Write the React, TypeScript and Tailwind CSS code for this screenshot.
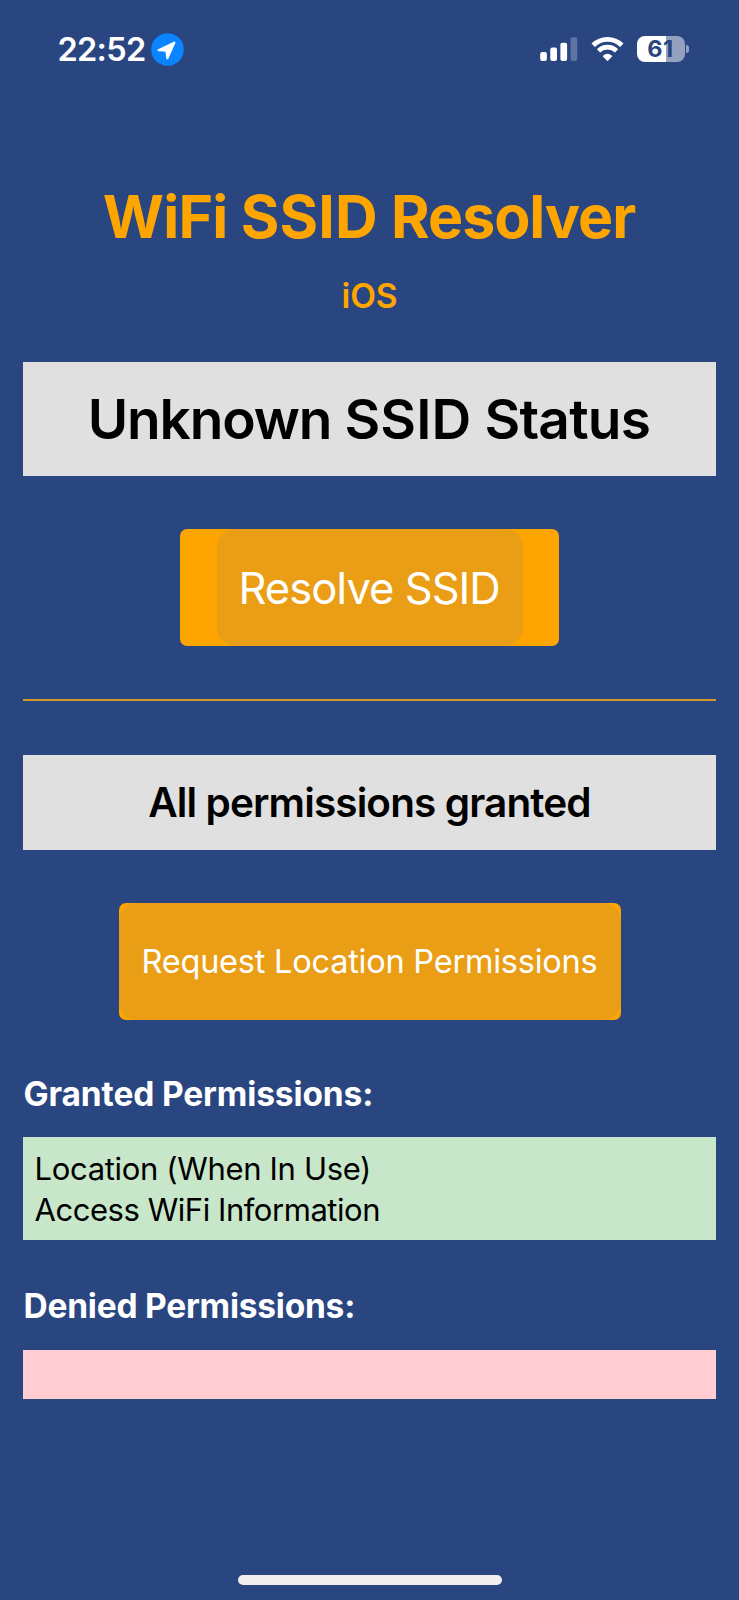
import React from "react";

function LocationBadge() {
  return (
    <svg className="ml-[5px] h-[33px] w-[33px]" viewBox="0 0 33 33" aria-hidden="true">
      <circle cx="16.5" cy="16.5" r="16.3" fill="#0a84ff" />
      <path
        d="M23.3 9.7 16.3 25.2 15.5 17.6 7.6 17.2Z"
        fill="#fff"
        stroke="#fff"
        strokeWidth="2.2"
        strokeLinejoin="round"
      />
    </svg>
  );
}

function CellularIcon() {
  return (
    <svg className="h-[26px] w-[38px]" viewBox="0 0 38 26" fill="#fff" aria-hidden="true">
      <rect x="0.2" y="16" width="6.7" height="9" rx="2" />
      <rect x="10.3" y="11.6" width="6.7" height="13.4" rx="2" />
      <rect x="20.4" y="6.8" width="6.7" height="18.2" rx="2" />
      <rect x="30.6" y="1.2" width="6.7" height="23.8" rx="2" opacity="0.25" />
    </svg>
  );
}

function WifiIcon() {
  return (
    <svg className="ml-[13px] h-[26px] w-[33px]" viewBox="0 0 33 26" fill="none" aria-hidden="true">
      <path d="M2.2 9.2a20.3 20.3 0 0 1 28.6 0" stroke="#fff" strokeWidth="4.8" />
      <path d="M7.5 14.8a12.8 12.8 0 0 1 18 0" stroke="#fff" strokeWidth="4.6" />
      <path
        d="M12.4 20.2a6.4 6.4 0 0 1 8.2 0L16.5 24.4Z"
        fill="#fff"
        stroke="#fff"
        strokeWidth="1.2"
        strokeLinejoin="round"
      />
    </svg>
  );
}

function Battery({ level }: { level: number }) {
  return (
    <div className="ml-[13px] flex items-center">
      <div className="flex h-[26px] w-[48px] items-center justify-center rounded-[8px] bg-[linear-gradient(to_right,#fff_61%,#94a2c0_61%)]">
        <span className="text-[23.5px] leading-[30px] font-bold tracking-[0.6px] text-[#2a4681]">
          {level}
        </span>
      </div>
      <div className="ml-[1.5px] h-[8px] w-[3px] rounded-r-full bg-[#94a2c0]" />
    </div>
  );
}

function StatusBar() {
  return (
    <header className="flex h-[98px] items-center justify-between pr-[50px] pl-[57.5px]">
      <div className="flex items-center">
        <span className="w-[88.5px] pt-px text-[32.5px] leading-[40px] font-semibold tracking-[-0.7px]">22:52</span>
        <LocationBadge />
      </div>
      <div className="flex items-center">
        <CellularIcon />
        <WifiIcon />
        <Battery level={61} />
      </div>
    </header>
  );
}

const granted = ["Location (When In Use)", "Access WiFi Information"];

export default function App() {
  return (
    <div className="flex h-[1600px] w-full flex-col overflow-hidden bg-[#2a4681] font-['Inter',sans-serif] whitespace-nowrap text-white">
      <StatusBar />
      <main className="flex flex-1 flex-col items-center px-[23px] pt-[88.5px]">
        <h1 className="pr-px text-[59px] leading-[60px] font-bold tracking-[-0.8px] text-[#ffa500]">
          WiFi <span className="tracking-[0.2px]">SSID</span>{" "}
          <span className="tracking-[-1.05px]">Resolver</span>
        </h1>
        <h2 className="mt-[29px] text-[33.5px] leading-[40px] font-semibold tracking-[-0.1px] text-[#ffa500]">
          iOS
        </h2>
        <div className="mt-[46px] flex h-[114px] w-full items-center justify-center bg-[#e0e0e0] pt-[2px] text-[55px] font-semibold text-black">
          <p className="pr-px tracking-[-0.75px]">
            <span className="tracking-[-1.15px]">Unknown</span>{" "}
            <span className="tracking-[0.1px]">SSID</span> Status
          </p>
        </div>
        <button className="mt-[53.5px] flex h-[117px] w-[379px] items-center justify-center rounded-[7px] bg-[#ffa500]">
          <span className="flex h-full w-[306px] items-center justify-center rounded-[18px] bg-[#ea9e15] pt-[2px] text-[43.5px] tracking-[-1.02px]">
            <span className="pr-px">
              <span className="tracking-[-0.9px]">Resolve</span> SSID
            </span>
          </span>
        </button>
        <hr className="mt-[53px] h-[2px] w-full border-0 bg-[#d0982a]" />
        <div className="mt-[54px] flex h-[95px] w-full items-center justify-center bg-[#e0e0e0] pt-[2px] text-[40.5px] font-semibold tracking-[-0.88px] text-black">
          All permissions granted
        </div>
        <button className="mt-[53px] flex h-[117px] w-[502px] items-center justify-center overflow-hidden rounded-[7px] bg-[#ffa500]">
          <span className="flex h-full w-full items-center justify-center rounded-[18px] bg-[#ea9e15] pt-[2px] text-[32.5px] tracking-[-0.23px]">
            Request Location Permissions
          </span>
        </button>
        <section className="mt-[54px] w-full">
          <h3 className="pl-[0.5px] text-[33.5px] leading-[40px] font-bold tracking-[-0.135px]">
            Granted Permissions:
          </h3>
          <ul className="mt-[23px] h-[103px] bg-[#c8e6c9] px-[11.5px] pt-[10.5px] text-[31px] leading-[41.5px] text-black">
            <li className="tracking-[-0.334px]">{granted[0]}</li>
            <li className="tracking-[-0.45px]">{granted[1]}</li>
          </ul>
        </section>
        <section className="mt-[46px] w-full">
          <h3 className="pl-[0.5px] text-[33.5px] leading-[40px] font-bold tracking-[-0.23px]">
            Denied Permissions:
          </h3>
          <div className="mt-[24px] h-[49px] bg-[#ffcdd2]" />
        </section>
      </main>
      <footer className="flex justify-center pb-[15px]">
        <div className="h-[10px] w-[264px] rounded-full bg-[#f0eeee]" />
      </footer>
    </div>
  );
}
